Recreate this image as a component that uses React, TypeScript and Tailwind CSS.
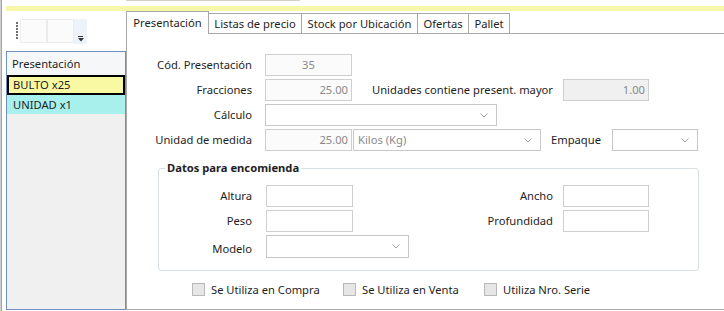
import React from "react";

const Chevron = () => (
  <svg width="8" height="5" viewBox="0 0 8 5" className="shrink-0">
    <path d="M0.5 0.5 L4 4 L7.5 0.5" fill="none" stroke="#a0a0a0" strokeWidth="1" />
  </svg>
);

function Field({
  w,
  value,
  align = "right",
  bg = "bg-[#fbfbfb]",
  className = "",
}: {
  w: string;
  value?: string;
  align?: "right" | "center";
  bg?: string;
  className?: string;
}) {
  return (
    <div
      className={`${w} h-[22px] border border-[#cfcfcf] ${bg} flex items-center px-[3px] text-[#8a8a8a] ${
        align === "center" ? "justify-center" : "justify-end"
      } ${className}`}
    >
      {value}
    </div>
  );
}

function Select({ w, value, className = "" }: { w: string; value?: string; className?: string }) {
  return (
    <div
      className={`${w} h-[22px] border border-[#c8c8c8] bg-white flex items-center justify-between pl-[4px] pr-[8px] text-[#8a8a8a] ${className}`}
    >
      <span>{value}</span>
      <Chevron />
    </div>
  );
}

function Check({ label, w }: { label: string; w: string }) {
  return (
    <div className={`${w} flex items-center`}>
      <div className="w-[13px] h-[13px] border border-[#b8b8b8] bg-[#e6e6e6]" />
      <span className="ml-[6px]">{label}</span>
    </div>
  );
}

export default function App() {
  const tabs = [
    { label: "Listas de precio", w: "w-[93px]" },
    { label: "Stock por Ubicación", w: "w-[116px]" },
    { label: "Ofertas", w: "w-[51px]" },
    { label: "Pallet", w: "w-[41px]" },
  ];

  return (
    <div className="w-[724px] h-[311px] overflow-hidden bg-white border-l border-[#cfcfcf] text-[11.2px] leading-none text-[#1e1e1e] font-['Noto_Sans',sans-serif]">
      <div className="h-full border-l border-[#a3a3a3] flex flex-col">
        {/* top edge */}
        <div className="h-[6px]">
          <div className="ml-[124px] w-[174px] h-px bg-[#d0d0d0]" />
        </div>
        <div className="ml-[4px] h-[5px] bg-[#f7f7aa]" />

        <div className="flex flex-1 min-h-0">
          {/* left panel */}
          <div className="w-[124px] flex flex-col">
            <div className="h-[40px] pt-[8px] pl-[14px] flex items-start">
              <div className="mt-[3px] flex flex-col gap-px">
                {[0, 1, 2, 3, 4, 5].map((i) => (
                  <div key={i} className="w-[2px] h-[2px] bg-[#6e6e6e]" />
                ))}
              </div>
              <div className="ml-[2px] w-[27px] h-[24px] border border-[#ececec] bg-[#fbfbfb]" />
              <div className="w-[27px] h-[24px] border border-[#ececec] bg-[#fbfbfb]" />
              <div className="w-[13px] h-[25px] bg-[#eef3fa] flex flex-col items-center justify-end pb-[2px]">
                <div className="w-[5px] h-px bg-[#333]" />
                <svg width="6" height="4" viewBox="0 0 6 4" className="mt-px">
                  <path d="M0 0 L6 0 L3 3.5 Z" fill="#333" />
                </svg>
              </div>
            </div>
            <div className="ml-[4px] flex-1 mb-[1px] border border-[#7090bd] bg-[#f0f0f0] flex flex-col">
              <div className="h-[23px] bg-[#f6f7f9] pl-[5px] flex items-center">Presentación</div>
              <div className="h-[20px] bg-[#f9f9a4] border-2 border-black pl-[4px] flex items-center">
                BULTO x25
              </div>
              <div className="h-[19px] bg-[#a8f0ec] pl-[6px] flex items-center">UNIDAD x1</div>
            </div>
          </div>

          {/* tabs */}
          <div className="flex-1 flex flex-col">
            <div className="h-[22px] flex items-end">
              <div className="w-[83px] h-[23px] -mb-px relative z-10 bg-white border border-b-0 border-[#a8a8a8] flex items-center justify-center pb-px">
                Presentación
              </div>
              {tabs.map((t) => (
                <div
                  key={t.label}
                  className={`${t.w} h-[20px] border-t border-r border-[#a8a8a8] bg-white flex items-center justify-center`}
                >
                  {t.label}
                </div>
              ))}
            </div>

            <div className="flex-1 mb-[1px] border-l border-t border-b border-[#a8a8a8] bg-white pt-[20px]">
              <div className="flex flex-col gap-[3px]">
                <div className="flex items-center">
                  <div className="w-[125px] text-right">Cód. Presentación</div>
                  <Field w="w-[87px]" value="35" align="center" className="ml-[13px]" />
                </div>
                <div className="flex items-center">
                  <div className="w-[125px] text-right">Fracciones</div>
                  <Field w="w-[87px]" value="25.00" className="ml-[13px]" />
                  <div className="w-[201px] text-right">Unidades contiene present. mayor</div>
                  <Field w="w-[86px]" value="1.00" bg="bg-[#f0f0f0]" className="ml-[10px]" />
                </div>
                <div className="flex items-center">
                  <div className="w-[125px] text-right">Cálculo</div>
                  <Select w="w-[232px]" className="ml-[13px]" />
                </div>
                <div className="flex items-center">
                  <div className="w-[125px] text-right">Unidad de medida</div>
                  <Field w="w-[87px]" value="25.00" className="ml-[13px]" />
                  <Select w="w-[188px]" value="Kilos (Kg)" className="ml-[1px]" />
                  <div className="w-[71px] pl-[10px]">Empaque</div>
                  <Select w="w-[86px]" />
                </div>
              </div>

              {/* group box */}
              <div className="relative mt-[17px] ml-[31px] w-[541px] h-[103px] border border-[#d5dfe5] rounded-[3px] pt-[16px] flex flex-col gap-[3px]">
                <span className="absolute left-[6px] -top-[7px] px-[2px] bg-white font-bold">
                  Datos para encomienda
                </span>
                <div className="flex items-center">
                  <div className="w-[93px] text-right">Altura</div>
                  <Field w="w-[87px]" bg="bg-white" className="ml-[14px]" />
                  <div className="w-[200px] text-right">Ancho</div>
                  <Field w="w-[86px]" bg="bg-white" className="ml-[10px]" />
                </div>
                <div className="flex items-center">
                  <div className="w-[93px] text-right">Peso</div>
                  <Field w="w-[87px]" bg="bg-white" className="ml-[14px]" />
                  <div className="w-[200px] text-right">Profundidad</div>
                  <Field w="w-[86px]" bg="bg-white" className="ml-[10px]" />
                </div>
                <div className="flex items-center">
                  <div className="w-[93px] text-right pt-[5px]">Modelo</div>
                  <Select w="w-[143px]" className="ml-[14px] h-[23px]" />
                </div>
              </div>

              <div className="mt-[12px] ml-[65px] h-[13px] flex items-center">
                <Check w="w-[151px]" label="Se Utiliza en Compra" />
                <Check w="w-[141px]" label="Se Utiliza en Venta" />
                <Check w="w-[140px]" label="Utiliza Nro. Serie" />
              </div>
            </div>
          </div>
        </div>
      </div>
    </div>
  );
}
